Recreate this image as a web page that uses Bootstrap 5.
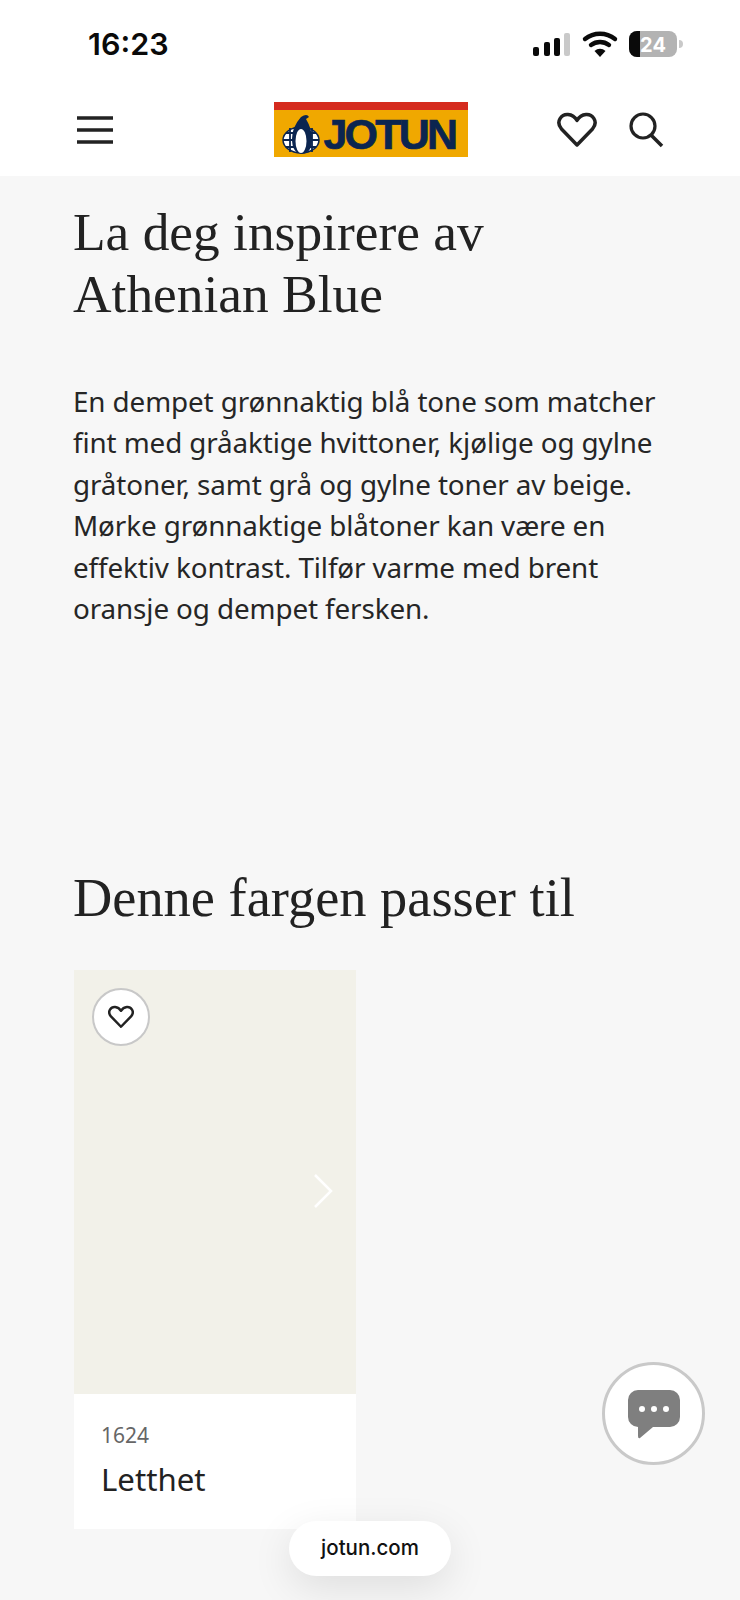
<!DOCTYPE html>
<html lang="no">
<head>
    <meta charset="utf-8">
    <title>Athenian Blue - Jotun</title>
    <link rel="stylesheet" href="https://cdn.jsdelivr.net/npm/bootstrap@5.3.0/dist/css/bootstrap.min.css">
    <style>
        /* Page */
        body {
            width: 740px;
            height: 1600px;
            overflow: hidden;
            background-color: #f7f7f7;
            color: #1f1f1f;
            font-family: "Noto Sans", sans-serif;
        }

        /* Status bar and header */
        .top-area {
            height: 176px;
        }
        .status-bar {
            height: 88px;
            padding: 24px 57px 0 88px;
        }
        .status-time {
            font-family: Inter, sans-serif;
            font-size: 30.5px;
            font-weight: 600;
            line-height: 40px;
            color: #0a0a0a;
        }
        .battery-text {
            font-family: Inter, sans-serif;
            font-size: 20px;
            font-weight: 700;
        }
        .site-header {
            height: 88px;
            padding: 0 76px 5px 77px;
        }
        .header-side {
            width: 199px;
        }
        .header-actions {
            gap: 31px;
        }

        /* Logo */
        .logo-box {
            width: 194px;
            height: 55px;
            background-color: #f0a800;
            border-top: 8px solid #d52b1e;
            padding-left: 8px;
            gap: 4px;
        }
        .logo-word {
            font-family: "Liberation Sans", sans-serif;
            font-weight: 700;
            font-size: 43px;
            line-height: 40px;
            letter-spacing: -2.8px;
            color: #0b2550;
            -webkit-text-stroke: 0.7px #0b2550;
        }

        /* Text sections */
        .page-content {
            padding: 25px 74px 0;
        }
        .serif-title {
            font-family: "Liberation Serif", serif;
            font-weight: 400;
            font-size: 53.4px;
            line-height: 62px;
            color: #222;
            margin: 0 0 0 -1px;
        }
        .intro-text {
            font-size: 27.8px;
            line-height: 41.4px;
            color: #262626;
            margin: 56px 0 0 -1px;
            letter-spacing: -0.1px;
        }
        .match-title {
            font-size: 54.4px;
            margin-top: 238px;
        }

        /* Colour card */
        .swatch-card {
            width: 282px;
            margin-top: 41px;
            background-color: #fff;
        }
        .swatch-colour {
            height: 424px;
            background-color: #f2f1e9;
        }
        .fav-button {
            top: 18px;
            left: 18px;
            width: 58px;
            height: 58px;
            background-color: #fff;
            border: 2px solid #c8c8c8;
        }
        .swatch-next {
            top: 204px;
            right: 23px;
        }
        .swatch-info {
            height: 135px;
            padding: 27px 27px 0;
        }
        .swatch-code {
            font-size: 21px;
            line-height: 28px;
            color: #666;
        }
        .swatch-name {
            font-size: 31.2px;
            line-height: 42px;
            margin-top: 9px;
            color: #222;
        }

        /* Floating things */
        .chat-button {
            left: 602px;
            top: 1362px;
            width: 103px;
            height: 103px;
            background-color: #fff;
            border: 3.5px solid #c9c9c9;
        }
        .url-pill {
            left: 289px;
            top: 1521px;
            width: 162px;
            height: 55px;
            border-radius: 28px;
            background-color: #fff;
            font-family: Inter, sans-serif;
            font-size: 20.5px;
            font-weight: 500;
            color: #111;
            box-shadow: 0 12px 40px rgba(0, 0, 0, 0.1);
        }
    </style>
</head>
<body class="position-relative">
    <!-- Status bar and header -->
    <div class="top-area bg-white">
        <div class="status-bar d-flex justify-content-between align-items-start">
            <span class="status-time">16:23</span>
            <svg width="150" height="32" viewBox="0 0 150 32" class="mt-1">
                <rect x="0" y="19" width="6" height="9" rx="2" fill="#0a0a0a"/>
                <rect x="11" y="14" width="6" height="14" rx="2" fill="#0a0a0a"/>
                <rect x="21" y="10" width="6" height="18" rx="2" fill="#0a0a0a"/>
                <rect x="31" y="5" width="6" height="23" rx="2" fill="#c9c9c9"/>
                <path d="M52 11 a24 24 0 0 1 30 0 M58 17 a15 15 0 0 1 18 0" fill="none" stroke="#0a0a0a" stroke-width="4.4" stroke-linecap="round"/>
                <path d="M61.500 23 a8 8 0 0 1 11 0 L67 29 z" fill="#0a0a0a"/>
                <rect x="96" y="3" width="48" height="26" rx="8" fill="#b3b3b3"/>
                <path d="M104 3 h3 v26 h-3 a8 8 0 0 1 -8 -8 v-10 a8 8 0 0 1 8 -8 z" fill="#0a0a0a"/>
                <path d="M146 12 a4 4 0 0 1 0 8 z" fill="#c9c9c9"/>
                <text x="120" y="24" text-anchor="middle" fill="#fff" class="battery-text">24</text>
            </svg>
        </div>
        <header class="site-header d-flex justify-content-between align-items-center">
            <div class="header-side">
                <svg width="36" height="30" viewBox="0 0 36 30" class="d-block">
                    <path d="M0 3 H36 M0 15 H36 M0 27 H36" stroke="#222" stroke-width="3.500"/>
                </svg>
            </div>
            <!-- Logo -->
            <div class="logo-box d-flex align-items-center flex-shrink-0">
                <svg width="38" height="42" viewBox="0 0 38 42" class="flex-shrink-0">
                    <ellipse cx="19" cy="27" rx="18" ry="13" fill="#fff" stroke="#0b2550" stroke-width="1.500"/>
                    <path d="M1 27 H37 M4 20 H34 M4 34 H34 M8 15 V39 M30 15 V39" stroke="#0b2550" stroke-width="1.800"/>
                    <path d="M19 4 q6 -4 8 0 l-3 2 q6 10 6 20 q0 14 -10 15 q-10 -1 -10 -15 q0 -12 9 -22 z" fill="#0b2550"/>
                    <ellipse cx="19" cy="28" rx="5.500" ry="12" fill="#fff"/>
                </svg>
                <span class="logo-word">JOTUN</span>
            </div>
            <div class="header-side header-actions d-flex align-items-center justify-content-end">
                <svg width="40" height="36" viewBox="0 0 40 36">
                    <path d="M20 33 L4.500 17 C-2 9 5 2 11 2.500 C15 2.800 18 5 20 8.500 C22 5 25 2.800 29 2.500 C35 2 42 9 35.500 17 Z" fill="none" stroke="#222" stroke-width="3.500" stroke-linejoin="round"/>
                </svg>
                <svg width="36" height="36" viewBox="0 0 36 36">
                    <circle cx="15" cy="14" r="12" fill="none" stroke="#222" stroke-width="3.200"/>
                    <path d="M23 23 L34 34" stroke="#222" stroke-width="3.600"/>
                </svg>
            </div>
        </header>
    </div>

    <main class="page-content">
        <h1 class="serif-title">La deg inspirere av<br>Athenian Blue</h1>
        <p class="intro-text">En dempet grønnaktig blå tone som matcher<br>fint med gråaktige hvittoner, kjølige og gylne<br>gråtoner, samt grå og gylne toner av beige.<br>Mørke grønnaktige blåtoner kan være en<br>effektiv kontrast. Tilfør varme med brent<br>oransje og dempet fersken.</p>

        <h2 class="serif-title match-title">Denne fargen passer til</h2>

        <div class="swatch-card">
            <div class="swatch-colour position-relative">
                <div class="fav-button position-absolute rounded-circle d-flex align-items-center justify-content-center">
                    <svg width="26" height="24" viewBox="0 0 40 36">
                        <path d="M20 33 L4.500 17 C-2 9 5 2 11 2.500 C15 2.800 18 5 20 8.500 C22 5 25 2.800 29 2.500 C35 2 42 9 35.500 17 Z" fill="none" stroke="#222" stroke-width="3.800" stroke-linejoin="round"/>
                    </svg>
                </div>
                <svg class="swatch-next position-absolute" width="20" height="34" viewBox="0 0 20 34">
                    <path d="M2 1 L18 17 L2 33" fill="none" stroke="#fff" stroke-width="2.500"/>
                </svg>
            </div>
            <div class="swatch-info">
                <div class="swatch-code">1624</div>
                <div class="swatch-name">Letthet</div>
            </div>
        </div>
    </main>

    <!-- Chat button -->
    <div class="chat-button position-absolute rounded-circle d-flex align-items-center justify-content-center">
        <svg width="54" height="50" viewBox="0 0 54 50">
            <path d="M11 1 H43 a10 10 0 0 1 10 10 V28 a10 10 0 0 1 -10 10 H26 L13 49 Q11 50 11 47 V38 a10 10 0 0 1 -10 -10 V11 a10 10 0 0 1 10 -10 z" fill="#7f7f7f"/>
            <circle cx="15" cy="20" r="3" fill="#fff"/>
            <circle cx="27" cy="20" r="3" fill="#fff"/>
            <circle cx="39" cy="20" r="3" fill="#fff"/>
        </svg>
    </div>

    <!-- Address pill -->
    <div class="url-pill position-absolute d-flex align-items-center justify-content-center">jotun.com</div>

    <script src="https://cdn.jsdelivr.net/npm/bootstrap@5.3.0/dist/js/bootstrap.bundle.min.js"></script>
</body>
</html>
